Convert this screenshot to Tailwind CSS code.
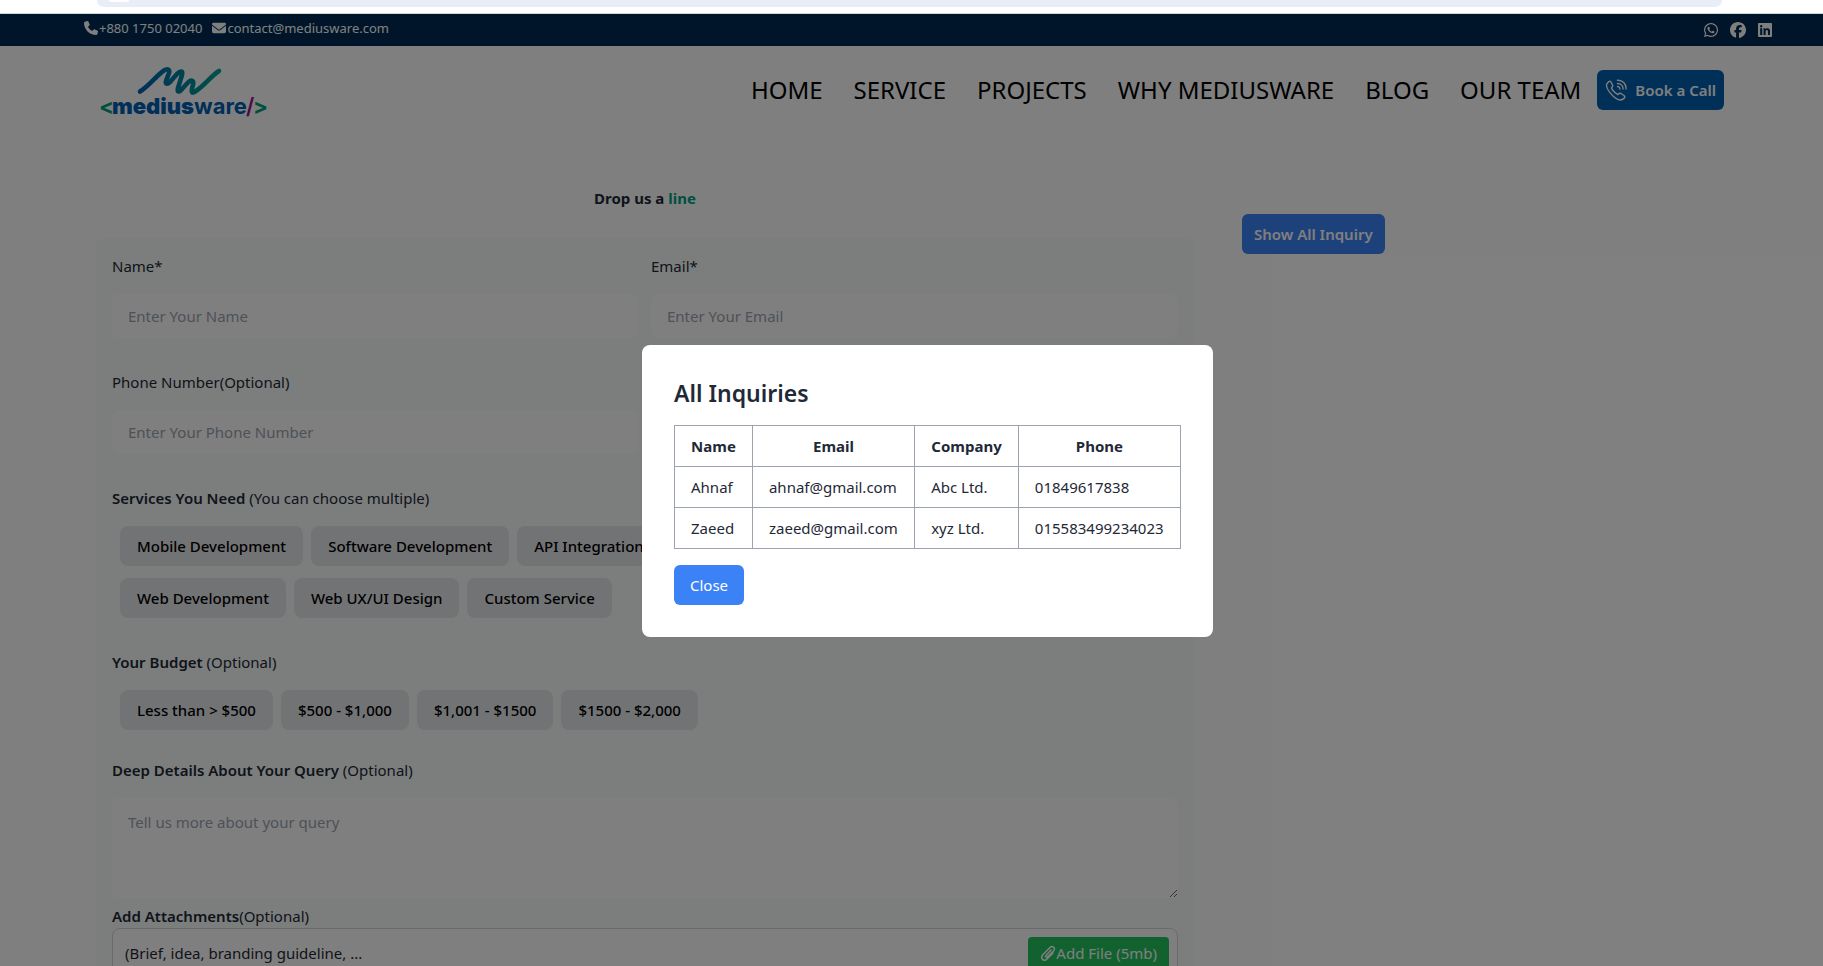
<!DOCTYPE html>
<html lang="en">
<head>
<meta charset="utf-8">
<title>Mediusware - Inquiry</title>
<script src="https://cdn.jsdelivr.net/npm/@tailwindcss/browser@4"></script>
</head>
<body class="bg-white font-['Noto_Sans',sans-serif] text-[15px] leading-6 text-[#1f2937]">
<div class="relative h-screen flex flex-col overflow-hidden">
  <!-- Browser toolbar edge -->
  <div class="shrink-0 h-[14px] bg-white border-b border-gray-300 pl-[97px] pr-[101px]">
    <div class="h-[7px] rounded-b-full bg-[#e9edf8] pl-3"><div class="h-[2px] w-5 rounded-b-full bg-white"></div></div>
  </div>

  <div class="relative flex-1 min-h-0 overflow-hidden">
    <!-- Contact bar -->
    <div class="h-8 bg-[#002b54] text-white flex items-center justify-between pl-[84px] pr-[51px]">
      <div class="flex items-center gap-2.5 text-[13px] leading-5 pb-1">
        <a href="tel:+880175002040" class="flex items-center gap-px">
          <svg class="size-[14px]" viewBox="0 0 512 512" fill="currentColor"><path d="M164.900 24.600c-7.700-18.600-28-28.500-47.400-23.200l-88 24C12.100 30.200 0 46 0 64c0 247.400 200.600 448 448 448 18 0 33.800-12.100 38.600-29.500l24-88c5.300-19.400-4.600-39.700-23.200-47.400l-96-40c-16.300-6.800-35.200-2.100-46.300 11.600L304.700 368C234.300 334.700 177.300 277.700 144 207.300l49.300-40.300c13.700-11.200 18.400-30 11.600-46.300z"/></svg>
          <span>+880 1750 02040</span>
        </a>
        <a href="mailto:contact@mediusware.com" class="flex items-center gap-px">
          <svg class="size-[14px]" viewBox="0 0 512 512" fill="currentColor"><path d="M48 64C21.500 64 0 85.500 0 112c0 15.100 7.100 29.300 19.200 38.400l217.600 163.200c11.400 8.500 27 8.500 38.400 0l217.600-163.200c12.100-9.100 19.200-23.300 19.200-38.400 0-26.500-21.500-48-48-48zM0 176v208c0 35.300 28.700 64 64 64h384c35.300 0 64-28.700 64-64V176L294.400 339.200a64 64 0 0 1-76.800 0z"/></svg>
          <span>contact@mediusware.com</span>
        </a>
      </div>
      <div class="flex items-center gap-3">
        <a href="#" aria-label="WhatsApp"><svg class="size-[14px]" viewBox="0 32 448 448" fill="currentColor"><path d="M380.900 97.100C339 55.100 283.200 32 223.900 32c-122.400 0-222 99.600-222 222 0 39.100 10.200 77.300 29.600 111L0 480l117.700-30.900c32.400 17.700 68.900 27 106.100 27h.1c122.300 0 224.100-99.600 224.100-222 0-59.300-25.200-115-67.100-157zm-157 341.600c-33.200 0-65.700-8.900-94-25.700l-6.700-4-69.800 18.300L72 359.200l-4.400-7c-18.500-29.400-28.200-63.300-28.200-98.200 0-101.700 82.800-184.500 184.600-184.500 49.300 0 95.600 19.200 130.400 54.100 34.800 34.900 56.200 81.200 56.100 130.500 0 101.800-84.900 184.600-186.600 184.600zm101.200-138.200c-5.500-2.800-32.800-16.200-37.900-18-5.100-1.900-8.800-2.800-12.500 2.800-3.700 5.600-14.300 18-17.600 21.800-3.200 3.700-6.500 4.200-12 1.400-32.600-16.300-54-29.100-75.500-66-5.700-9.800 5.700-9.100 16.300-30.300 1.800-3.700.9-6.900-.5-9.700-1.400-2.800-12.500-30.100-17.100-41.200-4.500-10.800-9.100-9.300-12.500-9.500-3.200-.2-6.900-.2-10.600-.2-3.700 0-9.700 1.400-14.800 6.900-5.100 5.600-19.400 19-19.400 46.300 0 27.300 19.900 53.700 22.600 57.400 2.800 3.700 39.100 59.700 94.800 83.800 35.200 15.200 49 16.500 66.600 13.900 10.700-1.600 32.800-13.400 37.400-26.400 4.600-13 4.600-24.100 3.200-26.400-1.300-2.500-5-3.900-10.500-6.600z"/></svg></a>
        <a href="#" aria-label="Facebook"><svg class="size-4" viewBox="0 0 512 512" fill="currentColor"><path d="M512 256C512 114.600 397.400 0 256 0S0 114.600 0 256c0 120 82.700 220.800 194.200 248.500V334.200h-52.800V256h52.800v-33.700c0-87.100 39.400-127.500 125-127.500 16.200 0 44.200 3.200 55.700 6.400V172c-6-.6-16.500-1-29.600-1-42 0-58.200 15.900-58.200 57.200V256h83.600l-14.400 78.200h-69.300v175.900C413.800 494.800 512 386.900 512 256z"/></svg></a>
        <a href="#" aria-label="LinkedIn"><svg class="size-[14px]" viewBox="0 0 448 448" fill="currentColor"><path d="M416 0H31.900C14.300 0 0 14.500 0 32.300v383.400C0 433.500 14.300 448 31.900 448H416c17.600 0 32-14.500 32-32.300V32.300C448 14.500 433.600 0 416 0zM135.400 384H69V170.200h66.500V384zM102.200 141a38.500 38.500 0 1 1 0-77 38.500 38.500 0 0 1 0 77zm282.100 243h-66.400V280c0-24.800-.5-56.700-34.500-56.700-34.600 0-39.900 27-39.900 54.900V384h-66.400V170.200h63.700v29.200h.9c8.900-16.800 30.600-34.500 62.900-34.500 67.200 0 79.700 44.300 79.700 101.900z"/></svg></a>
      </div>
    </div>

    <!-- Header -->
    <header class="h-[88px] flex items-center justify-between pl-[99px] pr-[99px]">
      <a href="#" aria-label="mediusware" class="block pt-1">
        <svg class="block w-[172px] h-[56px]" viewBox="0 0 172 56">
          <defs><linearGradient id="mark" x1="0" x2="1" y1="0" y2="0"><stop offset="0" stop-color="#0060b4"/><stop offset="1" stop-color="#00a48a"/></linearGradient></defs>
          <path d="M41 27.500C50 22 58 11 65 6.500C69 4 71 6 70 9L67 17C66 21 69 20 71 18L78 10C82 6 84 7 83 11L79 24C78 29 80 28 83 25L89 18.500C93 15 95 17 94 21C92 27 92 31 97 27C106 21 112 12 120 7" fill="none" stroke="url(#mark)" stroke-width="4.600" stroke-linecap="round" stroke-linejoin="round"/>
          <text y="50" font-family="Inter, sans-serif" font-size="22" font-weight="700" fill="#0060b4"><tspan x="0" fill="#00a080">&lt;</tspan><tspan x="13" font-weight="900">medius</tspan><tspan font-weight="700">ware</tspan><tspan x="147" fill="#a0108c" font-weight="600">/</tspan><tspan x="154" fill="#00a080">&gt;</tspan></text>
        </svg>
      </a>
      <div class="flex items-center gap-4">
        <nav class="flex items-center gap-[31px] text-2xl leading-8 text-black">
          <a href="#">HOME</a><a href="#">SERVICE</a><a href="#">PROJECTS</a><a href="#">WHY MEDIUSWARE</a><a href="#">BLOG</a><a href="#">OUR TEAM</a>
        </nav>
        <button class="h-10 flex items-center gap-2 rounded-md bg-[#0060b0] text-white font-semibold px-2">
          <svg class="size-[22px]" viewBox="0 0 22 22" fill="none" stroke="currentColor" stroke-width="1.400" stroke-linecap="round" stroke-linejoin="round"><path d="M4 2.500L2 4.500C-.5 9 10 21.500 16 21L19 19.500C20 18.500 20 17.500 19 16.500L16 14.500C15 14 14 14.500 13 15.500C11 15 7 11 6.500 9C8 7.500 8 7 7.500 6L6 3C5.500 2 4.500 2 4 2.500ZM12.500 7.500C14 7.500 15 9 14.800 10M12.500 4.500C16 4.500 18.300 7 18 10M12.500 1.200C18 1 21.500 5.500 21 10"/></svg>
          <span>Book a Call</span>
        </button>
      </div>
    </header>

    <main class="grid grid-cols-[2fr_1fr] pl-24 pr-20 pt-13">
      <section>
        <h1 class="text-center font-bold mb-7">Drop us a <span class="text-[#00a080]">line</span></h1>
        <form class="rounded-lg bg-[#f7fcfa] px-4 pt-4 pb-8 flex flex-col">
          <div class="grid grid-cols-2 gap-x-3 gap-y-7">
            <div class="flex flex-col gap-4">
              <label for="name">Name*</label>
              <input id="name" type="text" placeholder="Enter Your Name" class="h-11 rounded-lg bg-white px-4 placeholder:text-[#9ca3af]">
            </div>
            <div class="flex flex-col gap-4">
              <label for="email">Email*</label>
              <input id="email" type="email" placeholder="Enter Your Email" class="h-11 rounded-lg bg-white px-4 placeholder:text-[#9ca3af]">
            </div>
            <div class="flex flex-col gap-4 pt-1">
              <label for="phone">Phone Number(Optional)</label>
              <input id="phone" type="tel" placeholder="Enter Your Phone Number" class="h-11 rounded-lg bg-white px-4 placeholder:text-[#9ca3af]">
            </div>
          </div>
          <p class="mt-8"><span class="font-semibold">Services You Need</span> (You can choose multiple)</p>
          <div class="mt-4 pl-2 flex flex-col gap-3 font-medium text-black">
            <div class="flex gap-2">
              <button type="button" class="h-10 px-[17px] rounded-lg bg-[#e5e7eb]">Mobile Development</button>
              <button type="button" class="h-10 px-[17px] rounded-lg bg-[#e5e7eb]">Software Development</button>
              <button type="button" class="h-10 px-[17px] rounded-lg bg-[#e5e7eb]">API Integration</button>
            </div>
            <div class="flex gap-2">
              <button type="button" class="h-10 px-[17px] rounded-lg bg-[#e5e7eb]">Web Development</button>
              <button type="button" class="h-10 px-[17px] rounded-lg bg-[#e5e7eb]">Web UX/UI Design</button>
              <button type="button" class="h-10 px-[17px] rounded-lg bg-[#e5e7eb]">Custom Service</button>
            </div>
          </div>
          <p class="mt-8"><span class="font-semibold">Your Budget</span> (Optional)</p>
          <div class="mt-4 pl-2 flex gap-2 font-medium text-black">
            <button type="button" class="h-10 px-[17px] rounded-lg bg-[#e5e7eb]">Less than &gt; $500</button>
            <button type="button" class="h-10 px-[17px] rounded-lg bg-[#e5e7eb]">$500 - $1,000</button>
            <button type="button" class="h-10 px-[17px] rounded-lg bg-[#e5e7eb]">$1,001 - $1500</button>
            <button type="button" class="h-10 px-[17px] rounded-lg bg-[#e5e7eb]">$1500 - $2,000</button>
          </div>
          <label for="details" class="mt-7"><span class="font-semibold">Deep Details About Your Query</span> (Optional)</label>
          <textarea id="details" placeholder="Tell us more about your query" class="mt-4 h-[100px] rounded-lg bg-white px-4 py-3 placeholder:text-[#9ca3af] resize-y"></textarea>
          <label for="file" class="mt-1.5"><span class="font-semibold">Add Attachments</span>(Optional)</label>
          <div class="rounded-lg border border-gray-300 bg-white pl-3 pr-2 py-2 flex items-center justify-between">
            <span>(Brief, idea, branding guideline, ...</span>
            <button type="button" id="file" class="h-8 px-3 rounded-sm bg-[#22c55e] text-white flex items-center">
              <svg class="size-4" viewBox="0 0 16 16" fill="none" stroke="currentColor" stroke-width="1.500" stroke-linecap="round"><path d="M11 5L6 10.500C5 11.500 6.500 13 7.500 12L13.500 6C16 3 12.500 0 10 2.500L3 9.500C-.5 13.500 4 17 7 14L13 8"/></svg>
              <span>Add File (5mb)</span>
            </button>
          </div>
        </form>
      </section>
      <aside class="pl-12 pt-7">
        <button class="h-10 px-3 rounded-md bg-[#3b82f6] text-white font-semibold">Show All Inquiry</button>
      </aside>
    </main>

    <!-- Modal -->
    <div class="absolute inset-0 bg-black/50 flex items-center justify-center pl-8 pt-0.5">
      <div role="dialog" aria-labelledby="dlg" class="bg-white rounded-lg p-8">
        <h2 id="dlg" class="text-[23px] leading-8 font-semibold mb-4">All Inquiries</h2>
        <table class="w-[507px] border-collapse border border-[#9ca3af] [&_th]:border [&_th]:border-[#9ca3af] [&_th]:px-4 [&_th]:py-2 [&_th]:font-bold [&_td]:border [&_td]:border-[#9ca3af] [&_td]:px-4 [&_td]:py-2">
          <thead><tr><th>Name</th><th>Email</th><th>Company</th><th>Phone</th></tr></thead>
          <tbody>
            <tr><td>Ahnaf</td><td>ahnaf@gmail.com</td><td>Abc Ltd.</td><td>01849617838</td></tr>
            <tr><td>Zaeed</td><td>zaeed@gmail.com</td><td>xyz Ltd.</td><td>015583499234023</td></tr>
          </tbody>
        </table>
        <button class="mt-4 h-10 px-4 rounded-md bg-[#3b82f6] text-white">Close</button>
      </div>
    </div>
  </div>
</div>
</body>
</html>
